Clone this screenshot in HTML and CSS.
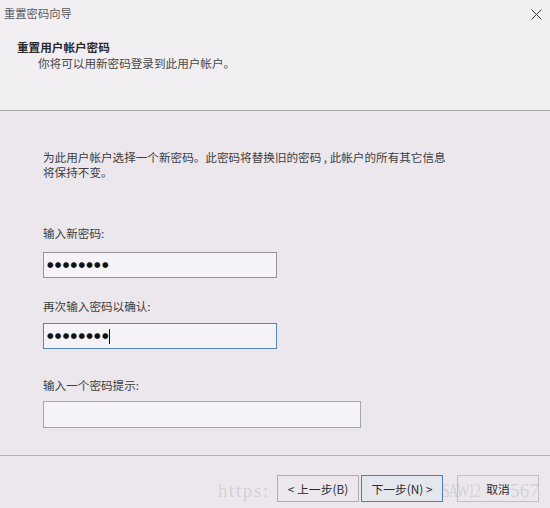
FILE: index.html
```html
<!DOCTYPE html>
<html lang="zh-CN">
<head>
<meta charset="utf-8">
<title>重置密码向导</title>
<link rel="stylesheet" href="styles.css">
</head>
<body>
<div class="dialog">
  <div class="top">
    <div class="titlebar">
      <span class="title">重置密码向导</span>
      <svg class="close" width="11" height="11" viewBox="0 0 11 11"><path d="M0.5 0.5 L10.5 10.5 M10.5 0.5 L0.5 10.5" stroke="#3a3a3a" stroke-width="1" fill="none"/></svg>
    </div>
    <div class="heading">重置用户帐户密码</div>
    <div class="subheading">你将可以用新密码登录到此用户帐户。</div>
  </div>
  <div class="content">
    <p class="intro">为此用户帐户选择一个新密码。此密码将替换旧的密码 , 此帐户的所有其它信息<br>将保持不变。</p>
    <div class="label l1">输入新密码:</div>
    <div class="field f1"><span class="dots">●●●●●●●●</span></div>
    <div class="label l2">再次输入密码以确认:</div>
    <div class="field f2 focused"><span class="dots">●●●●●●●●</span><span class="caret"></span></div>
    <div class="label l3">输入一个密码提示:</div>
    <div class="field f3 wide"></div>
  </div>
  <div class="footer">
    <button class="btn prev">&lt; 上一步(B)</button>
    <button class="btn next">下一步(N) &gt;</button>
    <button class="btn cancel">取消</button>
  </div>
  <div class="watermark">
    <span class="wm wm1">https:</span>
    <span class="wm wm2">SAW12</span>
    <span class="wm wm3">567</span>
  </div>
</div>
</body>
</html>
```
FILE: styles.css
```css
html, body {
  margin: 0;
  padding: 0;
}
body {
  width: 550px;
  height: 508px;
  overflow: hidden;
  background: #ebe7ec;
  font-family: "Noto Sans CJK SC", "Noto Sans", sans-serif;
  font-size: 11.6px;
  color: #333;
}
.dialog {
  position: relative;
  width: 550px;
  height: 508px;
  display: flex;
  flex-direction: column;
}
.top {
  box-sizing: border-box;
  height: 111px;
  background: #f2eff3;
  border-bottom: 1px solid #a9a5aa;
  flex: none;
}
.titlebar {
  display: flex;
  justify-content: space-between;
  align-items: center;
  padding: 6px 8px 0 4px;
  height: 14px;
  line-height: 14px;
}
.title {
  color: #5a5a5a;
  font-size: 11.3px;
}
.close {
  display: block;
  margin-top: 2px;
}
.heading {
  margin: 19px 0 0 17px;
  line-height: 16px;
  color: #2a2a2a;
  font-weight: bold;
}
.subheading {
  margin-left: 38px;
  line-height: 16px;
  color: #484848;
}
.content {
  flex: 1;
  padding: 39px 0 0 43px;
}
.intro {
  margin: 0;
  line-height: 15px;
  color: #3e3e3e;
}
.label {
  line-height: 14px;
  color: #3e3e3e;
}
.l1 { margin-top: 46px; }
.l2 { margin-top: 21px; }
.l3 { margin-top: 29px; }
.field {
  box-sizing: border-box;
  width: 234px;
  height: 26px;
  background: #f5f3f7;
  border: 1px solid #96949a;
  display: flex;
  align-items: center;
  padding-left: 3px;
}
.f1 { margin-top: 12px; }
.f2 { margin-top: 10px; }
.f3 { margin-top: 9px; }
.focused {
  border-color: #5685bb;
}
.wide {
  width: 318px;
  height: 27px;
  border-color: #a8a5aa;
}
.dots {
  font-family: "DejaVu Sans", sans-serif;
  font-size: 7.5px;
  letter-spacing: 1.3px;
  color: #111;
  line-height: 10px;
}
.caret {
  width: 1px;
  height: 15px;
  background: #111;
  margin-left: -1px;
}
.footer {
  box-sizing: border-box;
  height: 53px;
  flex: none;
  border-top: 1px solid #b4b0b5;
  display: flex;
  justify-content: flex-end;
  align-items: flex-start;
  padding: 19px 11px 0 0;
}
.btn {
  box-sizing: border-box;
  width: 82px;
  height: 27px;
  font-family: "Noto Sans CJK SC", "Noto Sans", sans-serif;
  font-size: 11.8px;
  color: #2a2a2a;
  background: #ebe7ec;
  border: 1px solid #aeaaae;
  padding: 0;
  margin: 0;
}
.next {
  margin-left: 2px;
  border-color: #4a7fb6;
  background: #e5e7ef;
}
.cancel {
  margin-left: 14px;
  border-color: #c2bec3;
  background: transparent;
}
.watermark {
  position: absolute;
  left: 0;
  top: 478px;
  width: 550px;
  height: 26px;
  pointer-events: none;
}
.wm {
  position: absolute;
  top: 0;
  font-family: "Liberation Serif", serif;
  font-size: 19px;
  line-height: 26px;
  color: rgba(110, 110, 110, 0.2);
  white-space: nowrap;
}
.wm1 { left: 218px; letter-spacing: 1.6px; }
.wm2 { left: 442px; letter-spacing: -1.4px; transform: scaleX(0.72); transform-origin: left center; }
.wm3 { left: 510px; letter-spacing: 0.2px; }
```
